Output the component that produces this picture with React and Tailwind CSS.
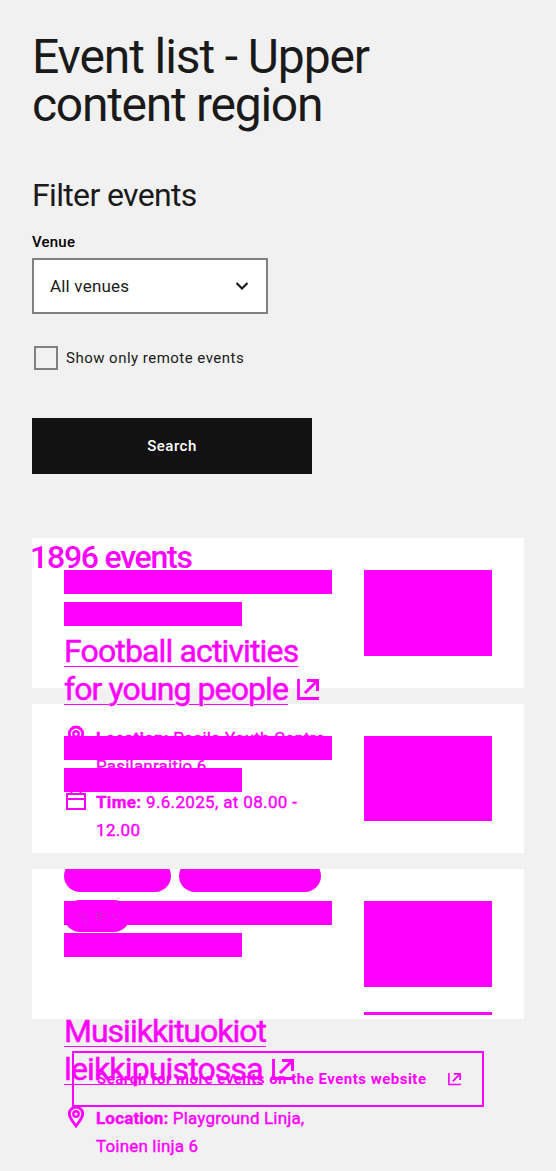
import React from "react";

function ExternalIcon({ className }) {
  return (
    <svg className={className} viewBox="0 0 22 22" fill="none" stroke="currentColor">
      <path d="M1.5 0V19.5H22" strokeWidth="2.800" />
      <path d="M8 14L19.5 2.500M10 1.500H20.500V12" strokeWidth="3" />
    </svg>
  );
}

function PinIcon() {
  return (
    <svg className="h-6 w-6 shrink-0" viewBox="0 0 24 24" fill="none" stroke="currentColor" strokeWidth="2">
      <path d="M12 22C8.500 17 5.300 14 5.300 9.500A6.700 6.500 0 0 1 18.700 9.500C18.700 14 15.500 17 12 22Z" strokeWidth="2.800" />
      <circle cx="12" cy="10" r="2.700" strokeWidth="2.400" />
    </svg>
  );
}

function CalendarIcon() {
  return (
    <svg className="h-6 w-6 shrink-0" viewBox="0 0 24 24" fill="none" stroke="currentColor" strokeWidth="2">
      <path d="M3 6H21V21H3ZM3 11H21M7.500 3V6M16.500 3V6" />
    </svg>
  );
}

function SkeletonCard() {
  return (
    <div className="flex h-[149.600px] justify-between bg-white p-8">
      <div className="flex w-[268px] flex-col gap-2">
        <div className="h-6 bg-[#ff00ff]" />
        <div className="h-6 w-[178px] bg-[#ff00ff]" />
      </div>
      <div className="h-[85.600px] w-32 bg-[#ff00ff]" />
    </div>
  );
}

function EventTitle({ first, second, firstClass, secondClass }) {
  return (
    <h4 className="text-[32px] leading-[38px] [-webkit-text-stroke:0.5px]">
      <span className={"block h-[38px] w-fit whitespace-nowrap underline decoration-1 underline-offset-[4px] " + firstClass}>{first}</span>
      <span className="flex h-[38px] items-start gap-[9px]">
        <span className={"whitespace-nowrap underline decoration-1 underline-offset-[4px] " + secondClass}>{second}</span>
        <ExternalIcon className="mt-[9px] h-[22px] w-[22px]" />
      </span>
    </h4>
  );
}

export default function App() {
  return (
    <main className="h-[1171px] w-[556px] overflow-hidden bg-[#f1f1f1] px-8 pt-[33px] font-['Roboto','Liberation_Sans',sans-serif] text-[#1a1a1a]">
      <h1 className="h-24 whitespace-nowrap text-[48px] leading-[48px]">
        <span className="block tracking-[-1.100px]">Event list - Upper</span>
        <span className="block tracking-[-1.280px]">content region</span>
      </h1>

      <form className="mt-[46px]">
        <h2 className="h-10 whitespace-nowrap text-[32px] leading-10 tracking-[-0.650px]">Filter events</h2>
        <label className="mt-4 block h-6 text-[15px] font-medium leading-[22px] tracking-[0.200px] text-black">Venue</label>
        <div className="mt-[3px] flex h-14 w-[236px] items-center justify-between border-2 border-[#808080] bg-white px-4 text-[17px] tracking-[0.200px]">
          <span className="pt-px">All venues</span>
          <svg className="mr-0.5 h-3 w-3" viewBox="0 0 12 12" fill="none" stroke="currentColor" strokeWidth="2.200">
            <path d="M0.500 3L6 8.500L11.500 3" />
          </svg>
        </div>
        <div className="ml-0.5 mt-8 flex h-6 items-center gap-2 text-[15px] tracking-[0.480px]">
          <span className="h-6 w-6 border-2 border-[#808080]" />
          <span>Show only remote events</span>
        </div>
        <button className="mt-12 h-14 w-[280px] bg-[#121212] text-[15px] font-medium tracking-[0.500px] text-white">Search</button>
      </form>

      <section className="relative mt-16 text-[#ff00ff]">
        <div className="flex flex-col gap-4">
          <SkeletonCard />
          <SkeletonCard />
          <SkeletonCard />
        </div>

        <div className="absolute left-0 top-0 w-[492px]">
          <h3 className="-ml-0.5 h-[94px] whitespace-nowrap text-[32px] font-medium leading-[38px] tracking-[-1.250px]">1896 events</h3>
          <div className="pl-8">
            <EventTitle first="Football activities" second="for young people" firstClass="tracking-[-0.860px]" secondClass="tracking-[-0.900px]" />
            <div className="mt-[16px] flex h-14 gap-2 text-[17px] leading-7 tracking-[0.200px] [-webkit-text-stroke:0.4px]">
              <PinIcon />
              <p className="whitespace-nowrap"><b className="font-bold">Location:</b> Pasila Youth Centre,<br />Pasilanraitio 6</p>
            </div>
            <div className="mt-2 flex h-14 gap-2 text-[17px] leading-7 tracking-[0.340px] [-webkit-text-stroke:0.4px]">
              <CalendarIcon />
              <p className="whitespace-nowrap"><b className="font-bold">Time:</b> 9.6.2025, at 08.00 -<br />12.00</p>
            </div>
          </div>
        </div>

        <div className="absolute left-8 top-[331px] w-[428px]">
          <div className="flex h-[23px] items-end gap-2 overflow-hidden">
            <span className="h-8 w-[107px] shrink-0 rounded-2xl bg-[#ff00ff]" />
            <span className="h-8 w-[142px] shrink-0 rounded-2xl bg-[#ff00ff]" />
          </div>
          <span className="mt-2 block h-8 w-[66px] rounded-2xl bg-[#ff00ff]">
            <svg className="h-8 w-[66px]" viewBox="0 0 66 32" stroke="#808080" fill="none">
              <path d="M14.500 14V16M17.500 15V17M19.500 14V15M21.500 20V24M32.500 13V20M37.500 15V21M42.500 12V15M48.500 15V17M52.500 19V21" strokeDasharray="1 2" />
            </svg>
          </span>
          <div className="ml-[300px] mt-20 h-[3px] w-32 bg-[#ff00ff]" />
        </div>

        <div className="absolute left-8 top-[474px]">
          <EventTitle first="Musiikkituokiot" second="leikkipuistossa" firstClass="tracking-[-1px]" secondClass="tracking-[-0.850px]" />
          <div className="mt-[16px] flex h-14 gap-2 text-[17px] leading-7 tracking-[0.170px] [-webkit-text-stroke:0.4px]">
            <PinIcon />
            <p className="whitespace-nowrap"><b className="font-bold">Location:</b> Playground Linja,<br />Toinen linja 6</p>
          </div>
        </div>

        <div className="absolute left-10 top-[513px] flex h-14 w-[412px] items-center justify-between border-2 border-[#ff00ff] pl-[23px] pr-[21px] text-[15px] font-bold tracking-[0.490px]">
          <span className="whitespace-nowrap">Search for more events on the Events website</span>
          <ExternalIcon className="h-[13px] w-[13px]" />
        </div>
      </section>
    </main>
  );
}
